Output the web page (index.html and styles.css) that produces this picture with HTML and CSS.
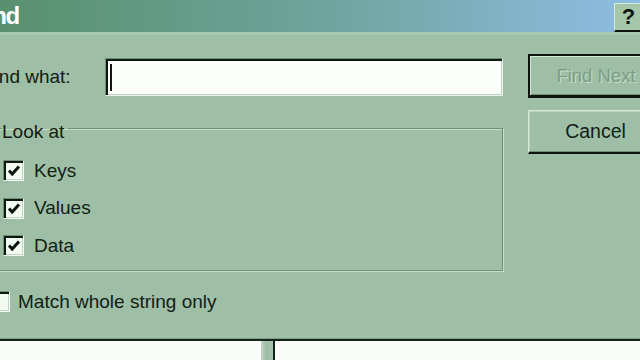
FILE: index.html
```html
<!DOCTYPE html>
<html lang="en">
<head>
    <meta charset="UTF-8">
    <meta name="viewport" content="width=device-width, initial-scale=1.0">
    <title>Find</title>
    <link rel="stylesheet" href="styles.css">
</head>
<body>

    <!-- Find dialog (left edge runs off the screen) -->
    <div class="dialog">
        <div class="titlebar">
            <span class="title">Find</span>
            <span class="help-btn">?</span>
        </div>

        <div class="content">
            <div class="form">
                <div class="find-row">
                    <span class="find-label">Find what:</span>
                    <div class="text-field"><span class="caret"></span></div>
                </div>

                <fieldset class="group">
                    <legend class="group-label">Look at</legend>
                    <div class="check-row">
                        <span class="checkbox">
                            <svg width="14" height="14" viewBox="0 0 14 14"><path d="M2 6.5 L5.2 10 L12 2.5" fill="none" stroke="#0c120e" stroke-width="3"/></svg>
                        </span>
                        <span>Keys</span>
                    </div>
                    <div class="check-row">
                        <span class="checkbox">
                            <svg width="14" height="14" viewBox="0 0 14 14"><path d="M2 6.5 L5.2 10 L12 2.5" fill="none" stroke="#0c120e" stroke-width="3"/></svg>
                        </span>
                        <span>Values</span>
                    </div>
                    <div class="check-row">
                        <span class="checkbox">
                            <svg width="14" height="14" viewBox="0 0 14 14"><path d="M2 6.5 L5.2 10 L12 2.5" fill="none" stroke="#0c120e" stroke-width="3"/></svg>
                        </span>
                        <span>Data</span>
                    </div>
                </fieldset>

                <div class="check-row match">
                    <span class="checkbox"></span>
                    <span>Match whole string only</span>
                </div>
            </div>

            <div class="buttons">
                <div class="btn btn-default disabled">Find Next</div>
                <div class="btn">Cancel</div>
            </div>
        </div>
    </div>

    <!-- Registry editor window behind the dialog -->
    <div class="panes">
        <div class="pane tree"></div>
        <div class="splitter"></div>
        <div class="pane list"></div>
    </div>

</body>
</html>
```

FILE: styles.css
```css
body {
    margin: 0;
    width: 640px;
    height: 360px;
    overflow: hidden;
    font-family: "Liberation Sans", Arial, sans-serif;
    font-size: 19px;
    color: #122016;
    background-color: #fafcfa;
}

.dialog {
    height: 339px;
    margin-left: -20px;
    background-color: #9ebfa5;
    border-bottom: 2px solid #15241a;
    box-shadow: inset 0 -1px 0 #7f9f87;
    overflow: hidden;
}

.titlebar {
    height: 32px;
    display: flex;
    align-items: center;
    justify-content: space-between;
    background: linear-gradient(to right, #578f6c, #6da39a 50%, #8dbde3);
    border-bottom: 3px solid #a8caae;
}

.title {
    color: white;
    font-size: 24px;
    font-weight: bold;
    margin-left: -6px;
    letter-spacing: -1.5px;
}

.help-btn {
    width: 27px;
    height: 26px;
    margin-right: -2px;
    margin-top: 2px;
    background-color: #a6c6aa;
    color: #0c140e;
    font-size: 22px;
    font-weight: bold;
    text-align: center;
    line-height: 26px;
    border-top: 1px solid #d8ecdc;
    border-left: 1px solid #d8ecdc;
    border-bottom: 2px solid #0c140e;
}

.content {
    display: flex;
    gap: 25px;
    padding-top: 19px;
}

.form {
    width: 523px;
    flex-shrink: 0;
}

.find-row {
    display: flex;
    align-items: center;
    height: 40px;
    margin-top: 3px;
}

.find-label {
    width: 122px;
    padding-left: 3px;
}

.text-field {
    flex: 1;
    height: 36px;
    background-color: #fcfefc;
    border-top: 1px solid #6f8f77;
    border-left: 1px solid #6f8f77;
    border-right: 1px solid #eaf4ea;
    border-bottom: 1px solid #eaf4ea;
    box-shadow: inset 2px 2px 0 #0e1810, inset -1px -1px 0 #c0d6c4;
    display: flex;
    align-items: center;
    padding-left: 4px;
}

.caret {
    width: 2px;
    height: 27px;
    background-color: #0e1810;
}

.group {
    margin: 16px 0 0 6px;
    padding: 9px 0 5px 16px;
    border: 1px solid #6e8e76;
    box-shadow: inset 1px 1px 0 #c6dec9, 1px 1px 0 #c6dec9;
}

.group-label {
    padding: 8px 4px 0 0;
    margin-left: -1px;
    line-height: 22px;
}

.check-row {
    display: flex;
    align-items: center;
    gap: 10px;
    height: 37.5px;
}

.checkbox {
    width: 21px;
    height: 21px;
    background-color: #f2faf2;
    border-top: 1px solid #6f8f77;
    border-left: 1px solid #6f8f77;
    border-right: 1px solid #f4faf4;
    border-bottom: 1px solid #f4faf4;
    box-shadow: inset 2px 2px 0 #0e1810, inset -1px -1px 0 #c0d6c4;
    display: flex;
    align-items: center;
    justify-content: center;
    padding: 1px 0 0 1px;
    box-sizing: border-box;
}

.match {
    height: 22px;
    margin: 20px 0 0 9px;
    gap: 8px;
}

.buttons {
    display: flex;
    flex-direction: column;
    gap: 12px;
    flex-shrink: 0;
}

.btn {
    width: 136px;
    height: 44px;
    box-sizing: border-box;
    display: flex;
    align-items: center;
    justify-content: center;
    font-size: 19.5px;
    border-top: 1px solid #d6ead9;
    border-left: 1px solid #d6ead9;
    border-right: 2px solid #0c140e;
    border-bottom: 2px solid #0c140e;
    box-shadow: inset -1px -1px 0 #6f8f77, inset 1px 1px 0 #b8d4bc;
}

.btn-default {
    border: 2px solid #0c140e;
    border-bottom-width: 3px;
    box-shadow: inset 1px 1px 0 #d6ead9, inset -1px -1px 0 #6f8f77;
    font-size: 18.5px;
}

.disabled {
    color: #7c9c84;
    text-shadow: 1px 1px 0 #c8e0cc;
}

.panes {
    display: flex;
    height: 19px;
}

.pane {
    background-color: #fafcfa;
}

.tree {
    width: 261px;
}

.splitter {
    width: 12px;
    background: linear-gradient(to right, #c4d6c6, #9fbca6 40%, #a8c4ae);
    border-right: 2px solid #15241a;
}

.list {
    flex: 1;
}
```
